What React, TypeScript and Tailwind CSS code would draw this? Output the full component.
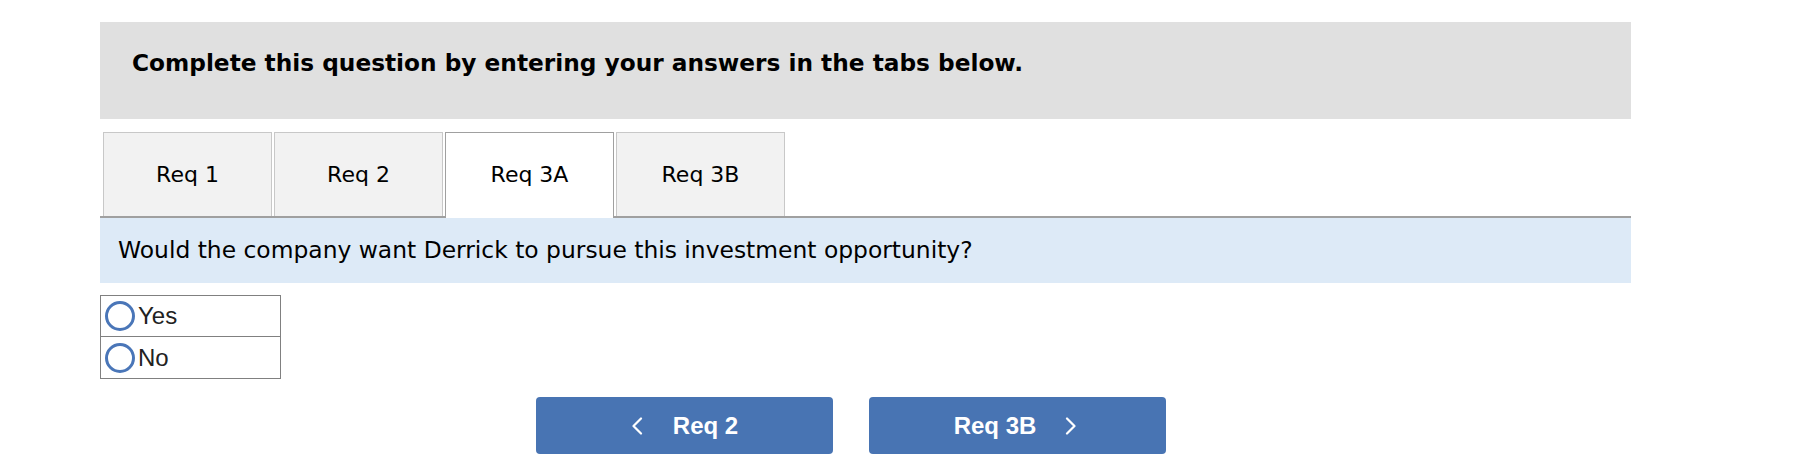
import React, { useState } from 'react';

const tabs = ['Req 1', 'Req 2', 'Req 3A', 'Req 3B'];

const Chevron = ({ dir }: { dir: 'left' | 'right' }) => (
  <svg width="12" height="18" viewBox="0 0 12 18" fill="none" stroke="white" strokeWidth="2.2" strokeLinecap="round" strokeLinejoin="round">
    {dir === 'left' ? <path d="M10 1.5 L2.5 9 L10 16.5" /> : <path d="M2 1.5 L9.5 9 L2 16.5" />}
  </svg>
);

const Radio = ({ checked }: { checked: boolean }) => (
  <span className="flex h-[30px] w-[30px] shrink-0 items-center justify-center rounded-full border-[3px] border-[#4a76b8] bg-white">
    {checked && <span className="h-[14px] w-[14px] rounded-full bg-[#4a76b8]" />}
  </span>
);

export default function App() {
  const [active] = useState(2);
  const [answer, setAnswer] = useState<string | null>(null);

  return (
    <div className="h-[472px] w-[1820px] bg-white pl-[100px] pt-[22px]" style={{ fontFamily: '"DejaVu Sans", Verdana, sans-serif' }}>
      <div className="w-[1531px]">
        {/* instructions banner */}
        <div className="h-[97px] bg-[#e0e0e0] pl-[32px] pt-[24px]">
          <p className="text-[23.25px] font-bold leading-[34px] text-black">
            Complete this question by entering your answers in the tabs below.
          </p>
        </div>

        {/* tab strip */}
        <div className="mt-[13px] flex gap-[2px] border-b-2 border-[#a0a0a0] pl-[3px]">
          {tabs.map((t, i) => (
            <div
              key={t}
              className={
                i === active
                  ? 'relative -mb-[2px] flex h-[86px] w-[169px] items-center justify-center border border-b-0 border-[#a0a0a0] bg-white pb-[2px] text-[22px] text-black'
                  : 'flex h-[84px] w-[169px] items-center justify-center border border-b-0 border-[#c8c8c8] bg-[#f2f2f2] text-[22px] text-black'
              }
            >
              {t}
            </div>
          ))}
        </div>

        {/* question */}
        <div className="flex h-[65px] items-center bg-[#ddeaf7] pl-[18px]">
          <p className="text-[23.4px] text-black">Would the company want Derrick to pursue this investment opportunity?</p>
        </div>

        {/* answer choices */}
        <div className="mt-[12px] w-[181px] border border-[#808080]" style={{ fontFamily: '"Liberation Sans", Arial, sans-serif' }}>
          {['Yes', 'No'].map((opt, i) => (
            <button
              key={opt}
              onClick={() => setAnswer(opt)}
              className={`flex h-[41px] w-full items-center gap-[3px] pl-[4px] text-[24px] text-[#222] ${i === 0 ? 'border-b border-[#808080]' : ''}`}
            >
              <Radio checked={answer === opt} />
              {opt}
            </button>
          ))}
        </div>

        {/* navigation */}
        <div className="ml-[436px] mt-[18px] flex gap-[36px]" style={{ fontFamily: '"Liberation Sans", Arial, sans-serif' }}>
          <button className="flex h-[57px] w-[297px] items-center justify-center gap-[30px] rounded-[4px] bg-[#4874b3] text-[24px] font-bold text-white">
            <Chevron dir="left" />
            <span>Req 2</span>
          </button>
          <button className="flex h-[57px] w-[297px] items-center justify-center gap-[29px] rounded-[4px] bg-[#4874b3] pr-[4px] text-[24px] font-bold text-white">
            <span>Req 3B</span>
            <Chevron dir="right" />
          </button>
        </div>
      </div>
    </div>
  );
}
